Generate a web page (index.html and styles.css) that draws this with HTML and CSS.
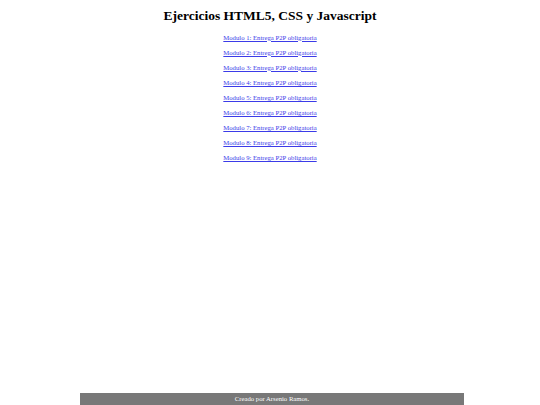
FILE: index.html
```html
<!DOCTYPE html>
<html lang="es">
<head>
<meta charset="utf-8">
<title>Ejercicios HTML5, CSS y Javascript</title>
<link rel="stylesheet" href="styles.css">
</head>
<body>
<div class="page">
  <main class="content">
    <h1 class="title">Ejercicios HTML5, CSS y Javascript</h1>
    <ul class="modules">
      <li><a href="#">Modulo 1: Entrega P2P obligatoria</a></li>
      <li><a href="#">Modulo 2: Entrega P2P obligatoria</a></li>
      <li><a href="#">Modulo 3: Entrega P2P obligatoria</a></li>
      <li><a href="#">Modulo 4: Entrega P2P obligatoria</a></li>
      <li><a href="#">Modulo 5: Entrega P2P obligatoria</a></li>
      <li><a href="#">Modulo 6: Entrega P2P obligatoria</a></li>
      <li><a href="#">Modulo 7: Entrega P2P obligatoria</a></li>
      <li><a href="#">Modulo 8: Entrega P2P obligatoria</a></li>
      <li><a href="#">Modulo 9: Entrega P2P obligatoria</a></li>
    </ul>
  </main>
  <footer class="footer">Creado por Arsenio Ramos.</footer>
</div>
</body>
</html>
```
FILE: styles.css
```css
html, body {
  margin: 0;
  padding: 0;
  height: 100%;
}
body {
  font-family: "Liberation Serif", "Times New Roman", serif;
  background: #fff;
  color: #000;
}
.page {
  height: 405px;
  display: flex;
  flex-direction: column;
  align-items: center;
}
.content {
  flex: 1;
  width: 100%;
  text-align: center;
}
.title {
  font-size: 13.5px;
  font-weight: bold;
  margin: 8px 0 0;
  line-height: 16px;
}
.modules {
  list-style: none;
  margin: 8.7px 0 0;
  padding: 0;
  display: flex;
  flex-direction: column;
  gap: 6.1px;
}
.modules li {
  font-size: 6.7px;
  line-height: 9px;
}
.modules a {
  color: #3b3be8;
  text-decoration: underline;
}
.footer {
  width: 384px;
  height: 12px;
  margin-left: 4px;
  background: #787878;
  color: #fff;
  font-size: 6.7px;
  line-height: 12px;
  text-align: center;
}
```
